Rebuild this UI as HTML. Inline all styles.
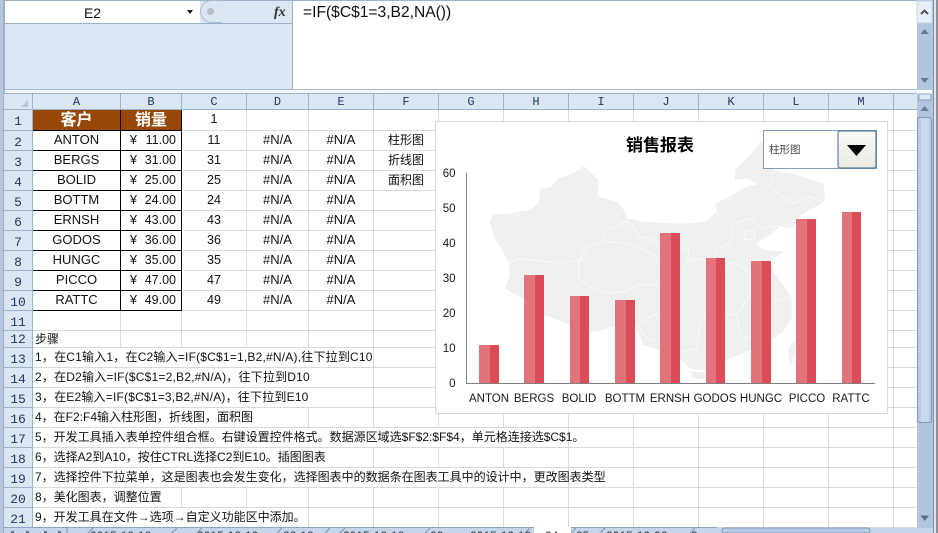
<!DOCTYPE html>
<html lang="zh"><head><meta charset="utf-8"><title>销售报表</title>
<style>
html,body{margin:0;padding:0;width:938px;height:533px;overflow:hidden;background:#fff}
body{position:relative;font-family:"Liberation Sans","Noto Sans CJK SC",sans-serif;font-size:12px;color:#111}
.a{position:absolute}
table{border-collapse:separate;border-spacing:0;table-layout:fixed;position:absolute}
td{padding:0;border-right:1px solid #d9d9d9;border-bottom:1px solid #d9d9d9;white-space:nowrap;overflow:visible;text-align:center;vertical-align:top;line-height:18px;box-sizing:border-box;font-size:12.5px}
#sh td:nth-child(2),#sh td:nth-child(5),#sh td:nth-child(6){font-size:13px}
#sh td:nth-child(7){font-size:12px}
#sh td.h{background:#dbe6f3;border-right:1px solid #9eb1cc;border-bottom:1px solid #9eb1cc;font-family:"Liberation Mono",monospace;font-size:13px;color:#1f3864;line-height:14px;padding-top:5px}
#sh td.h12{padding-top:2px}
td.k{border-right:1px solid #000;border-bottom:1px solid #000}
#sh td.br{background:#974706;color:#fff;font-weight:bold;font-size:16px;line-height:17px;padding-top:2px}
#sh td.l{text-align:left;padding-left:2px;font-size:12px;line-height:20px}
#sh td.m{text-align:right;padding-right:5px;position:relative;font-size:12.5px}
td.m i{position:absolute;left:9px;font-style:normal}
#hd td{border-right:1px solid #9eb1cc;border-bottom:1px solid #9eb1cc;background:#dbe6f3;font-family:"Liberation Mono",monospace;font-size:12px;color:#1f3864;line-height:14px;padding-top:1px}
</style></head><body>
<!-- window edges -->
<div class="a" style="left:0;top:0;width:3px;height:533px;background:#b4c6dd"></div>
<div class="a" style="left:3px;top:0;width:2px;height:533px;background:#9eb1cc"></div>
<div class="a" style="left:4px;top:0;width:914px;height:1px;background:#9eb1cc"></div>
<!-- name box -->
<div class="a" style="left:5px;top:1px;width:195px;height:22px;background:#fff;text-align:center;line-height:24px;font-size:14px;padding-right:20px;box-sizing:border-box">E2</div>
<div class="a" style="left:187px;top:10px;width:0;height:0;border-left:3.5px solid transparent;border-right:3.5px solid transparent;border-top:4px solid #111"></div>
<div class="a" style="left:200px;top:1px;width:93px;height:88px;background:#dbe6f3"></div>
<div class="a" style="left:200px;top:0;width:22px;height:23px;background:#dbe6f3;border:1px solid #a9b9cf;border-right:0;border-radius:12px 0 0 12px;box-sizing:border-box"></div>
<div class="a" style="left:207px;top:8px;width:7px;height:7px;border-radius:50%;background:#b9bec6"></div>
<div class="a" style="left:274px;top:5px;font:italic bold 14px 'Liberation Serif',serif;color:#333">fx</div>
<div class="a" style="left:5px;top:23px;width:288px;height:66px;background:#dbe6f3;border-top:1px solid #9eb1cc;box-sizing:border-box"></div>
<div class="a" style="left:292px;top:0;width:1px;height:89px;background:#9eb1cc"></div>
<div class="a" style="left:303px;top:4px;font-size:15.6px;line-height:18px;white-space:nowrap">=IF($C$1=3,B2,NA())</div>
<div class="a" style="left:5px;top:89px;width:912px;height:1px;background:#a9b9cf"></div>
<div class="a" style="left:5px;top:90px;width:912px;height:3px;background:#f3f6fa"></div>
<div class="a" style="left:5px;top:93px;width:912px;height:1px;background:#9eb1cc"></div>
<!-- column header -->
<table id="hd" style="left:4px;top:94px;width:913px">
<colgroup><col style="width:29px"><col style="width:88px"><col style="width:61px"><col style="width:65px"><col style="width:62px"><col style="width:65px"><col style="width:65px"><col style="width:65px"><col style="width:65px"><col style="width:65px"><col style="width:65px"><col style="width:65px"><col style="width:65px"><col style="width:65px"><col style="width:24px"></colgroup>
<tr style="height:16px"><td></td><td>A</td><td>B</td><td>C</td><td>D</td><td>E</td><td>F</td><td>G</td><td>H</td><td>I</td><td>J</td><td>K</td><td>L</td><td>M</td><td style="border-right:0"></td></tr>
</table>
<div class="a" style="left:21px;top:100px;width:0;height:0;border-left:7px solid transparent;border-bottom:7px solid #b8c4d2"></div>
<!-- sheet -->
<table id="sh" style="left:4px;top:110px;width:913px">
<colgroup><col style="width:29px"><col style="width:88px"><col style="width:61px"><col style="width:65px"><col style="width:62px"><col style="width:65px"><col style="width:65px"><col style="width:65px"><col style="width:65px"><col style="width:65px"><col style="width:65px"><col style="width:65px"><col style="width:65px"><col style="width:65px"><col style="width:24px"></colgroup>
<tr style="height:21px"><td class="h">1</td><td class="k br">客户</td><td class="k br">销量</td><td>1</td><td></td><td></td><td></td><td></td><td></td><td></td><td></td><td></td><td></td><td></td><td></td></tr>
<tr style="height:20px"><td class="h">2</td><td class="k">ANTON</td><td class="k m"><i>¥</i>11.00</td><td>11</td><td>#N/A</td><td>#N/A</td><td>柱形图</td><td></td><td></td><td></td><td></td><td></td><td></td><td></td><td></td></tr>
<tr style="height:20px"><td class="h">3</td><td class="k">BERGS</td><td class="k m"><i>¥</i>31.00</td><td>31</td><td>#N/A</td><td>#N/A</td><td>折线图</td><td></td><td></td><td></td><td></td><td></td><td></td><td></td><td></td></tr>
<tr style="height:20px"><td class="h">4</td><td class="k">BOLID</td><td class="k m"><i>¥</i>25.00</td><td>25</td><td>#N/A</td><td>#N/A</td><td>面积图</td><td></td><td></td><td></td><td></td><td></td><td></td><td></td><td></td></tr>
<tr style="height:20px"><td class="h">5</td><td class="k">BOTTM</td><td class="k m"><i>¥</i>24.00</td><td>24</td><td>#N/A</td><td>#N/A</td><td></td><td></td><td></td><td></td><td></td><td></td><td></td><td></td><td></td></tr>
<tr style="height:20px"><td class="h">6</td><td class="k">ERNSH</td><td class="k m"><i>¥</i>43.00</td><td>43</td><td>#N/A</td><td>#N/A</td><td></td><td></td><td></td><td></td><td></td><td></td><td></td><td></td><td></td></tr>
<tr style="height:20px"><td class="h">7</td><td class="k">GODOS</td><td class="k m"><i>¥</i>36.00</td><td>36</td><td>#N/A</td><td>#N/A</td><td></td><td></td><td></td><td></td><td></td><td></td><td></td><td></td><td></td></tr>
<tr style="height:20px"><td class="h">8</td><td class="k">HUNGC</td><td class="k m"><i>¥</i>35.00</td><td>35</td><td>#N/A</td><td>#N/A</td><td></td><td></td><td></td><td></td><td></td><td></td><td></td><td></td><td></td></tr>
<tr style="height:20px"><td class="h">9</td><td class="k">PICCO</td><td class="k m"><i>¥</i>47.00</td><td>47</td><td>#N/A</td><td>#N/A</td><td></td><td></td><td></td><td></td><td></td><td></td><td></td><td></td><td></td></tr>
<tr style="height:20px"><td class="h">10</td><td class="k">RATTC</td><td class="k m"><i>¥</i>49.00</td><td>49</td><td>#N/A</td><td>#N/A</td><td></td><td></td><td></td><td></td><td></td><td></td><td></td><td></td><td></td></tr>
<tr style="height:20px"><td class="h">11</td><td></td><td></td><td></td><td></td><td></td><td></td><td></td><td></td><td></td><td></td><td></td><td></td><td></td><td></td></tr>
<tr style="height:17px"><td class="h h12">12</td><td class="l" style="line-height:16px">步骤</td><td></td><td></td><td></td><td></td><td></td><td></td><td></td><td></td><td></td><td></td><td></td><td></td><td></td></tr>
<tr style="height:20px"><td class="h">13</td><td class="l" colspan="5" style="line-height:19px;letter-spacing:.2px">1，在C1输入1，在C2输入=IF($C$1=1,B2,#N/A),往下拉到C10</td><td></td><td></td><td></td><td></td><td></td><td></td><td></td><td></td><td></td></tr>
<tr style="height:20px"><td class="h">14</td><td class="l" colspan="5" style="line-height:19px;letter-spacing:.2px">2，在D2输入=IF($C$1=2,B2,#N/A)，往下拉到D10</td><td></td><td></td><td></td><td></td><td></td><td></td><td></td><td></td><td></td></tr>
<tr style="height:20px"><td class="h">15</td><td class="l" colspan="5" style="line-height:19px;letter-spacing:.2px">3，在E2输入=IF($C$1=3,B2,#N/A)，往下拉到E10</td><td></td><td></td><td></td><td></td><td></td><td></td><td></td><td></td><td></td></tr>
<tr style="height:20px"><td class="h">16</td><td class="l" colspan="4" style="line-height:19px">4，在F2:F4输入柱形图，折线图，面积图</td><td></td><td></td><td></td><td></td><td></td><td></td><td></td><td></td><td></td><td></td></tr>
<tr style="height:20px"><td class="h">17</td><td class="l" colspan="8" style="line-height:19px">5，开发工具插入表单控件组合框。右键设置控件格式。数据源区域选$F$2:$F$4，单元格连接选$C$1。</td><td></td><td></td><td></td><td></td><td></td><td></td></tr>
<tr style="height:20px"><td class="h">18</td><td class="l" colspan="5" style="line-height:19px">6，选择A2到A10，按住CTRL选择C2到E10。插图图表</td><td></td><td></td><td></td><td></td><td></td><td></td><td></td><td></td><td></td></tr>
<tr style="height:20px"><td class="h">19</td><td class="l" colspan="8" style="line-height:19px">7，选择控件下拉菜单，这是图表也会发生变化，选择图表中的数据条在图表工具中的设计中，更改图表类型</td><td></td><td></td><td></td><td></td><td></td><td></td></tr>
<tr style="height:20px"><td class="h">20</td><td class="l" colspan="2" style="line-height:19px">8，美化图表，调整位置</td><td></td><td></td><td></td><td></td><td></td><td></td><td></td><td></td><td></td><td></td><td></td><td></td></tr>
<tr style="height:20px"><td class="h">21</td><td class="l" colspan="4" style="line-height:19px">9，开发工具在文件→选项→自定义功能区中添加。</td><td></td><td></td><td></td><td></td><td></td><td></td><td></td><td></td><td></td><td></td></tr>
</table>
<!-- chart -->
<svg class="a" style="left:0;top:0" width="938" height="533" viewBox="0 0 938 533">
<rect x="435.5" y="121.5" width="452" height="292" fill="#fff" stroke="#d9d9d9"/>
<g transform="translate(430 115) scale(.33333)">
<path fill="#f0f0f0" d="M178 320L190 298L240 295L300 285L325 265L330 222L365 215L385 190L430 175L462 153L480 170L505 195L503 245L560 260L590 295L590 310L640 320L720 325L790 325L830 318L860 290L855 265L890 250L950 215L985 208L950 190L915 195L915 165L960 120L1000 75L1060 70L1030 165L1100 180L1180 205L1185 260L1130 290L1100 310L1090 340L1050 335L1020 360L975 385L1005 405L1060 410L1020 440L1030 470L1060 510L1085 545L1085 610L1060 650L1000 690L950 710L880 740L850 770L780 760L740 720L640 690L620 640L600 620L500 650L470 650L400 620L340 600L290 560L225 520L240 480L235 440L195 370Z"/>
<path fill="#f0f0f0" d="M780 770L830 772L825 790L790 790ZM1075 700L1090 680L1100 700L1085 750L1075 730Z"/>
<path fill="none" stroke="#fff" stroke-width="2" d="M235 445L265 430L300 435L355 440L395 445L470 430M520 380L525 345L590 320L610 330L625 365L655 370L690 385M470 395L520 380L590 385L640 405L690 430M445 445L470 395M445 445L445 490L490 520L540 535L590 530L620 510L690 510M750 410L775 395L775 430L760 470L690 520M690 590L620 630L640 660L670 680M750 710L800 700L810 620L850 590L920 600L930 660L1000 690M1030 170L1020 210L1050 240L1090 265L1140 245L1185 265M900 340L925 320L965 310L990 340L1010 335L1055 335M905 345L905 385L860 400L850 440L800 430L775 440M940 350L970 345L975 370L945 375ZM900 440L960 470L960 540L1040 560L1085 545M850 590L860 500L900 440M960 540L920 600"/>
<g>
<rect x="147" y="690" width="32" height="115" fill="#e2737b"/><rect x="179" y="690" width="28" height="115" fill="#d94c58"/>
<rect x="282" y="480" width="32" height="325" fill="#e2737b"/><rect x="314" y="480" width="28" height="325" fill="#d94c58"/>
<rect x="420" y="543" width="30" height="262" fill="#e2737b"/><rect x="450" y="543" width="27" height="262" fill="#d94c58"/>
<rect x="555" y="555" width="32" height="250" fill="#e2737b"/><rect x="587" y="555" width="28" height="250" fill="#d94c58"/>
<rect x="690" y="354" width="32" height="451" fill="#e2737b"/><rect x="722" y="354" width="28" height="451" fill="#d94c58"/>
<rect x="828" y="429" width="30" height="376" fill="#e2737b"/><rect x="858" y="429" width="27" height="376" fill="#d94c58"/>
<rect x="963" y="438" width="32" height="367" fill="#e2737b"/><rect x="995" y="438" width="28" height="367" fill="#d94c58"/>
<rect x="1098" y="312" width="32" height="493" fill="#e2737b"/><rect x="1130" y="312" width="28" height="493" fill="#d94c58"/>
<rect x="1236" y="291" width="30" height="514" fill="#e2737b"/><rect x="1266" y="291" width="27" height="514" fill="#d94c58"/>
</g></g>
<path d="M466.5 173V383.5H875" fill="none" stroke="#808080"/>
<g font-family="Liberation Sans, sans-serif" font-size="11.5" fill="#1a1a1a" text-anchor="end">
<text x="455.500" y="177">60</text><text x="455.500" y="212">50</text><text x="455.500" y="247">40</text><text x="455.500" y="282">30</text><text x="455.500" y="317">20</text><text x="455.500" y="352">10</text><text x="455.500" y="387">0</text>
</g>
<g font-family="Liberation Sans, sans-serif" font-size="11.500" fill="#1a1a1a" text-anchor="middle">
<text x="489" y="402">ANTON</text><text x="534" y="402">BERGS</text><text x="579" y="402">BOLID</text><text x="625" y="402">BOTTM</text><text x="670" y="402">ERNSH</text><text x="715" y="402">GODOS</text><text x="761" y="402">HUNGC</text><text x="807" y="402">PICCO</text><text x="851" y="402">RATTC</text>
</g>
<text x="660" y="151" text-anchor="middle" font-family="Noto Sans CJK SC, sans-serif" font-weight="bold" font-size="17" fill="#000">销售报表</text>
<!-- combobox -->
<rect x="763.500" y="130.500" width="113" height="38" fill="#fff" stroke="#7f9db9"/>
<text x="769" y="153" font-family="Noto Sans CJK SC, sans-serif" font-size="10.500" fill="#444">柱形图</text>
<defs><linearGradient id="g" x1="0" y1="0" x2="0" y2="1"><stop offset="0" stop-color="#fafaf7"/><stop offset="1" stop-color="#e9e8e0"/></linearGradient></defs>
<rect x="838" y="131" width="38" height="37" rx="2" fill="url(#g)" stroke="#3c6a9a"/>
<path d="M847 145H866L856.500 156Z" fill="#000"/>
<!-- vertical scrollbar -->
<rect x="917" y="0" width="16" height="533" fill="#b0c5de"/>
<rect x="917" y="1" width="15" height="22" fill="#e9eff7" stroke="#c3d3e6"/>
<path d="M921 14L924.500 10.500L928 14" fill="none" stroke="#555" stroke-width="2"/>
<path d="M920.500 34L924.500 29L929 34ZM920.500 78L929 78L924.500 83ZM920.500 111L929 111L924.500 106Z" fill="#6b7a99"/>
<rect x="917" y="90" width="15" height="4" fill="#fff"/>
<rect x="919" y="94" width="12" height="6" fill="#dfe8f3" stroke="#8aa0be"/>
<rect x="917.500" y="117.500" width="14" height="305" rx="2" fill="#b7cbe3" stroke="#7f98b8"/>
<rect x="921" y="118" width="8" height="304" fill="#c9d9eb"/>
<path d="M920.500 515.500H929L924.700 521Z" fill="#5f6d8c"/>
<rect x="933" y="0" width="1" height="533" fill="#7f93ad"/>
<rect x="934" y="0" width="2" height="533" fill="#dfe3e8"/>
<rect x="936" y="0" width="2" height="533" fill="#8a8f94"/>
<!-- tab bar -->
<rect x="4" y="528" width="929" height="5" fill="#c5d6ea"/>
<rect x="4" y="527" width="713" height="1" fill="#8ea4c2"/>
<path d="M67 533V528M88 533L93 528M172 533L177 528M197 533L202 528M277 533L282 528M325 533L330 528M340 533L345 528M425 533L430 528M525 533L530 528M571 533L576 528M600 533L605 528M690 533L695 528" stroke="#7f93ad" fill="none"/>
<path d="M11 531h3v2h-3zM26 531h3v2h-3zM44 531h3v2h-3zM58 531h3v2h-3z" fill="#5f6d8c"/>
<rect x="534" y="527" width="37" height="6" fill="#fff"/>
<g font-family="Liberation Sans, sans-serif" font-size="12" fill="#333">
<text x="90" y="540">2015-12-18</text><text x="197" y="540">2015-12-19</text><text x="283" y="540">22-12</text><text x="343" y="540">2015-12-19</text><text x="430" y="540">22</text><text x="470" y="540">2015-12-19</text><text x="545" y="540">24</text><text x="576" y="540">25</text><text x="606" y="540">2015-12-26</text><text x="691" y="540">2</text>
</g>
<rect x="722" y="528" width="148" height="5" rx="2" fill="#b7cbe3" stroke="#7f98b8"/>
<rect x="872" y="528" width="45" height="5" fill="#c5d6ea"/>
</svg>
</body></html>
